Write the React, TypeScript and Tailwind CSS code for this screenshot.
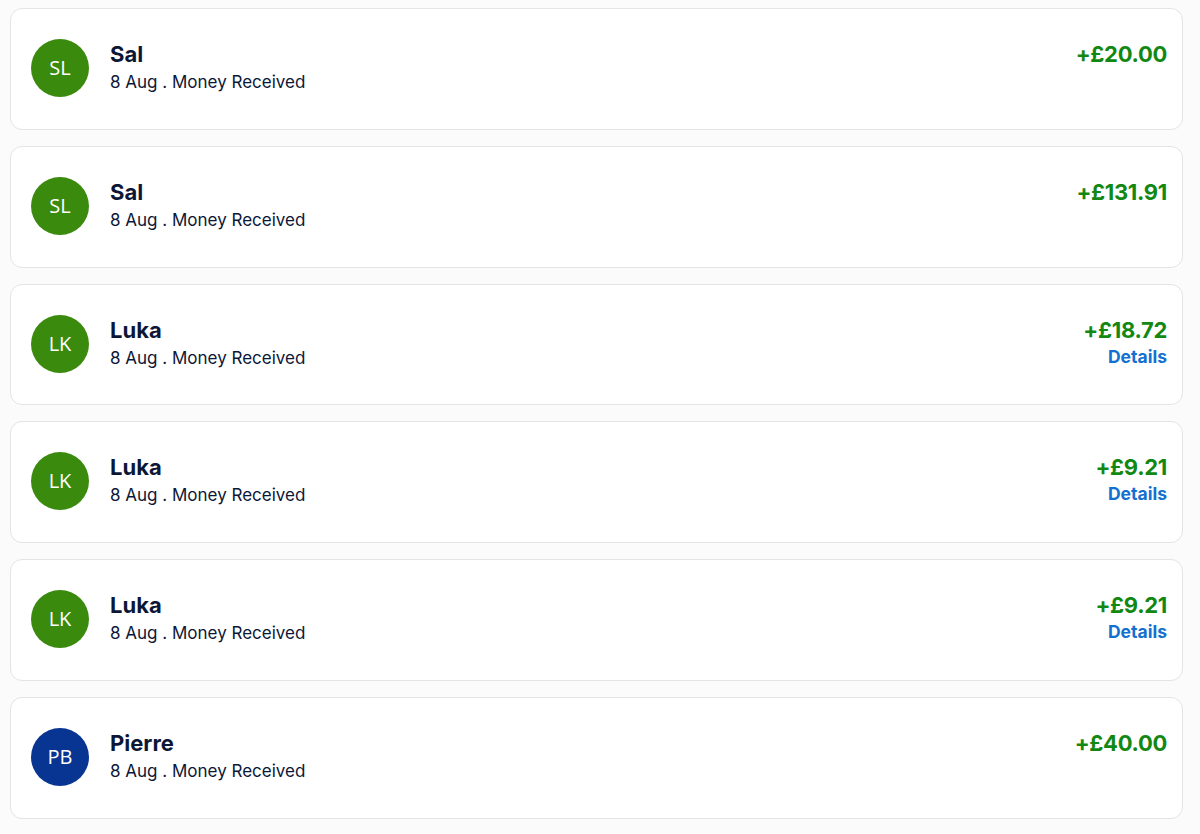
import React from "react";

type Tx = { initials: string; name: string; amount: string; details?: boolean; color: "green" | "blue" };

const items: Tx[] = [
  { initials: "SL", name: "Sal", amount: "+£20.00", color: "green" },
  { initials: "SL", name: "Sal", amount: "+£131.91", color: "green" },
  { initials: "LK", name: "Luka", amount: "+£18.72", details: true, color: "green" },
  { initials: "LK", name: "Luka", amount: "+£9.21", details: true, color: "green" },
  { initials: "LK", name: "Luka", amount: "+£9.21", details: true, color: "green" },
  { initials: "PB", name: "Pierre", amount: "+£40.00", color: "blue" },
];

export default function App() {
  return (
    <div className="w-[1200px] h-[834px] bg-[#fbfbfb] pl-[10px] pr-[17px] pt-[8px] flex flex-col gap-[16px] overflow-hidden">
      {items.map((t, i) => (
        <div
          key={i}
          className="h-[121.8px] shrink-0 bg-white border border-[#e4e4e4] rounded-[12px] flex items-start pl-[20px] pr-[15px] pt-[30px]"
        >
          <div
            className={
              "w-[58px] h-[58px] rounded-full flex items-center justify-center text-white text-[20px] shrink-0 " +
              (t.color === "green" ? "bg-[#3a8a0e]" : "bg-[#083591]")
            }
            style={{ fontFamily: '"Open Sans", sans-serif' }}
          >
            {t.initials}
          </div>
          <div className="ml-[21px] flex flex-col pt-[1px]" style={{ fontFamily: "Inter, sans-serif" }}>
            <div className="text-[22px] leading-[28px] font-bold text-[#0c1738]">{t.name}</div>
            <div className="mt-[2px] text-[17px] leading-[24px] text-[#0c1738]">8 Aug . Money Received</div>
          </div>
          <div className="ml-auto flex flex-col items-end pt-[1px]" style={{ fontFamily: "Inter, sans-serif" }}>
            <div className="text-[22px] leading-[28px] font-bold text-[#128812] tracking-[-0.3px]">{t.amount}</div>
            {t.details && (
              <div className="text-[17.5px] leading-[25px] font-bold text-[#1470d0]">Details</div>
            )}
          </div>
        </div>
      ))}
    </div>
  );
}
